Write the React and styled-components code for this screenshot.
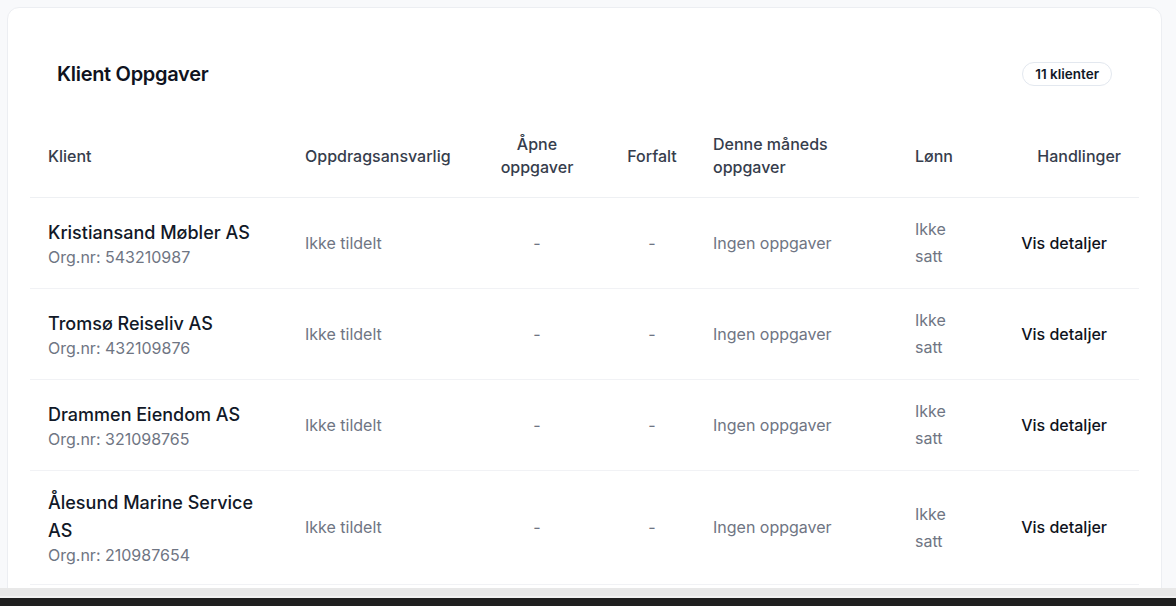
import React from 'react';
import styled, { createGlobalStyle } from 'styled-components';

const GlobalStyle = createGlobalStyle`
  html, body {
    margin: 0;
    padding: 0;
    background: #f8f9fb;
    font-family: Inter, "Noto Sans", sans-serif;
    color: #111827;
    overflow: hidden;
  }
  * { box-sizing: border-box; }
`;

const Page = styled.div`
  padding: 7px 14px 40px 7px;
  height: 606px;
`;

const Card = styled.section`
  background: #ffffff;
  border: 1px solid #eceef2;
  border-radius: 12px;
  padding: 24px 22px;
`;

const Header = styled.header`
  display: flex;
  align-items: center;
  justify-content: space-between;
  padding: 28px 27px 26px 27px;
`;

const Title = styled.h2`
  margin: 0;
  font-size: 20px;
  line-height: 28px;
  font-weight: 600;
  letter-spacing: -0.3px;
  color: #0f1320;
`;

const Badge = styled.span`
  display: inline-flex;
  align-items: center;
  height: 24px;
  padding: 0 12px;
  border: 1px solid #e3e8ef;
  border-radius: 999px;
  font-size: 13.5px;
  font-weight: 600;
  color: #111827;
`;

const Table = styled.table`
  width: 100%;
  border-collapse: collapse;
  table-layout: fixed;
`;

const Th = styled.th`
  padding: 19px 18px 18px;
  font-size: 16px;
  line-height: 23px;
  font-weight: 500;
  color: #363d4c;
  text-align: ${({ $align }) => $align || 'left'};
  vertical-align: middle;
  border-bottom: 1px solid #eef0f3;
`;

const Tr = styled.tr`
  border-bottom: 1px solid #f1f2f5;
`;

const Td = styled.td`
  padding: 18px 18px;
  font-size: 16px;
  line-height: 27px;
  color: ${({ $muted }) => ($muted ? '#6f7583' : '#111827')};
  text-align: ${({ $align }) => $align || 'left'};
  vertical-align: middle;
`;

const Name = styled.div`
  font-size: 18px;
  line-height: 28px;
  font-weight: 500;
  color: #111827;
`;

const Org = styled.div`
  font-size: 16px;
  line-height: 21px;
  color: #6f7583;
`;

const DetailsButton = styled.button`
  background: transparent;
  border: none;
  padding: 0 14px 0 0;
  font-family: inherit;
  font-size: 16px;
  font-weight: 500;
  color: #0f1320;
  cursor: pointer;
`;

const BottomBar = styled.div`
  position: fixed;
  left: 0;
  right: 0;
  bottom: 0;
  height: 18px;
  background: #1f1f1f;
  border-top: 8px solid #e8e8e8;
  box-shadow: inset 0 2px 0 #f2f2f2;
`;

const clients = [
  { name: 'Kristiansand Møbler AS', org: '543210987' },
  { name: 'Tromsø Reiseliv AS', org: '432109876' },
  { name: 'Drammen Eiendom AS', org: '321098765' },
  { name: 'Ålesund Marine Service AS', org: '210987654' },
];

export default function App() {
  return (
    <>
      <GlobalStyle />
      <Page>
        <Card>
          <Header>
            <Title>Klient Oppgaver</Title>
            <Badge>11 klienter</Badge>
          </Header>
          <Table>
            <colgroup>
              <col style={{ width: 257 }} />
              <col style={{ width: 178 }} />
              <col style={{ width: 144 }} />
              <col style={{ width: 86 }} />
              <col style={{ width: 202 }} />
              <col style={{ width: 91 }} />
              <col />
            </colgroup>
            <thead>
              <tr>
                <Th>Klient</Th>
                <Th>Oppdragsansvarlig</Th>
                <Th $align="center">Åpne oppgaver</Th>
                <Th $align="center">Forfalt</Th>
                <Th>Denne måneds oppgaver</Th>
                <Th>Lønn</Th>
                <Th $align="right">Handlinger</Th>
              </tr>
            </thead>
            <tbody>
              {clients.map((c) => (
                <Tr key={c.org}>
                  <Td>
                    <Name>{c.name}</Name>
                    <Org>Org.nr: {c.org}</Org>
                  </Td>
                  <Td $muted>Ikke tildelt</Td>
                  <Td $muted $align="center">-</Td>
                  <Td $muted $align="center">-</Td>
                  <Td $muted>Ingen oppgaver</Td>
                  <Td $muted>Ikke satt</Td>
                  <Td $align="right">
                    <DetailsButton>Vis detaljer</DetailsButton>
                  </Td>
                </Tr>
              ))}
            </tbody>
          </Table>
        </Card>
      </Page>
      <BottomBar />
    </>
  );
}
